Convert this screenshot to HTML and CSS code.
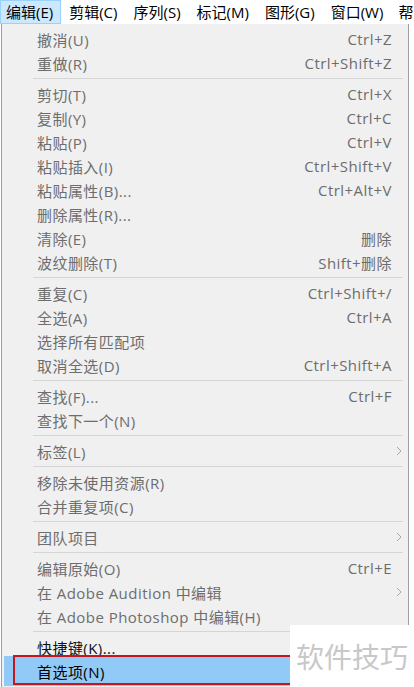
FILE: index.html
```html
<!DOCTYPE html>
<html lang="zh-CN">
<head>
<meta charset="utf-8">
<title>编辑菜单</title>
<link rel="stylesheet" href="styles.css">
</head>
<body>
<div class="menubar">
  <span class="mb-item active">编辑(E)</span>
  <span class="mb-item">剪辑(C)</span>
  <span class="mb-item">序列(S)</span>
  <span class="mb-item">标记(M)</span>
  <span class="mb-item">图形(G)</span>
  <span class="mb-item">窗口(W)</span>
  <span class="mb-item last">帮</span>
</div>
<div class="dropdown">
  <div class="row"><span class="label">撤消(U)</span><span class="key">Ctrl+Z</span><span class="arr"></span></div>
  <div class="row"><span class="label">重做(R)</span><span class="key">Ctrl+Shift+Z</span><span class="arr"></span></div>
  <div class="sep"></div>
  <div class="row"><span class="label">剪切(T)</span><span class="key">Ctrl+X</span><span class="arr"></span></div>
  <div class="row"><span class="label">复制(Y)</span><span class="key">Ctrl+C</span><span class="arr"></span></div>
  <div class="row"><span class="label">粘贴(P)</span><span class="key">Ctrl+V</span><span class="arr"></span></div>
  <div class="row"><span class="label">粘贴插入(I)</span><span class="key">Ctrl+Shift+V</span><span class="arr"></span></div>
  <div class="row"><span class="label">粘贴属性(B)...</span><span class="key">Ctrl+Alt+V</span><span class="arr"></span></div>
  <div class="row"><span class="label">删除属性(R)...</span><span class="key"></span><span class="arr"></span></div>
  <div class="row"><span class="label">清除(E)</span><span class="key">删除</span><span class="arr"></span></div>
  <div class="row"><span class="label">波纹删除(T)</span><span class="key">Shift+删除</span><span class="arr"></span></div>
  <div class="sep"></div>
  <div class="row"><span class="label">重复(C)</span><span class="key">Ctrl+Shift+/</span><span class="arr"></span></div>
  <div class="row"><span class="label">全选(A)</span><span class="key">Ctrl+A</span><span class="arr"></span></div>
  <div class="row"><span class="label">选择所有匹配项</span><span class="key"></span><span class="arr"></span></div>
  <div class="row"><span class="label">取消全选(D)</span><span class="key">Ctrl+Shift+A</span><span class="arr"></span></div>
  <div class="sep"></div>
  <div class="row"><span class="label">查找(F)...</span><span class="key">Ctrl+F</span><span class="arr"></span></div>
  <div class="row"><span class="label">查找下一个(N)</span><span class="key"></span><span class="arr"></span></div>
  <div class="sep"></div>
  <div class="row"><span class="label">标签(L)</span><span class="key"></span><span class="arr"><svg width="6" height="10" viewBox="0 0 6 10"><path d="M1 1 L5 5 L1 9" fill="none" stroke="#a6a6a6" stroke-width="1"/></svg></span></div>
  <div class="sep"></div>
  <div class="row"><span class="label">移除未使用资源(R)</span><span class="key"></span><span class="arr"></span></div>
  <div class="row"><span class="label">合并重复项(C)</span><span class="key"></span><span class="arr"></span></div>
  <div class="sep"></div>
  <div class="row"><span class="label">团队项目</span><span class="key"></span><span class="arr"><svg width="6" height="10" viewBox="0 0 6 10"><path d="M1 1 L5 5 L1 9" fill="none" stroke="#a6a6a6" stroke-width="1"/></svg></span></div>
  <div class="sep"></div>
  <div class="row"><span class="label">编辑原始(O)</span><span class="key">Ctrl+E</span><span class="arr"></span></div>
  <div class="row"><span class="label">在 Adobe Audition 中编辑</span><span class="key"></span><span class="arr"><svg width="6" height="10" viewBox="0 0 6 10"><path d="M1 1 L5 5 L1 9" fill="none" stroke="#a6a6a6" stroke-width="1"/></svg></span></div>
  <div class="row"><span class="label">在 Adobe Photoshop 中编辑(H)</span><span class="key"></span><span class="arr"></span></div>
  <div class="sep"></div>
  <div class="row dark"><span class="label">快捷键(K)...</span><span class="key"></span><span class="arr"></span></div>
  <div class="row dark selected"><span class="label">首选项(N)</span><span class="key"></span><span class="arr"></span></div>
</div>
<div class="redbox"></div>
<div class="watermark">软件技巧</div>
</body>
</html>
```

FILE: styles.css
```css
html, body {
  margin: 0;
  padding: 0;
  background: #ffffff;
  width: 414px;
  height: 687px;
  overflow: hidden;
  position: relative;
  font-family: "Open Sans", "Noto Sans CJK SC", sans-serif;
  font-size: 15px;
}

.menubar {
  display: flex;
  height: 24px;
  background: #ffffff;
  white-space: nowrap;
  overflow: hidden;
}

.mb-item {
  display: flex;
  align-items: center;
  padding: 0 7px 0 7px;
  color: #000000;
  line-height: 24px;
  box-sizing: border-box;
  border: 1px solid transparent;
}

.mb-item.active {
  background: #cce8ff;
  border-color: #99d1ff;
  padding-left: 5px;
}

.mb-item.last {
  padding-left: 6px;
}

.dropdown {
  margin-left: 1px;
  width: 408px;
  box-sizing: border-box;
  border-left: 1px solid #a0a0a0;
  border-right: 1px solid #a0a0a0;
  background: #f0f0f0;
  padding-top: 3px;
  height: 663px;
  letter-spacing: 0.45px;
}

.row {
  display: grid;
  grid-template-columns: 1fr auto 16px;
  align-items: center;
  height: 24px;
  padding-left: 35px;
  color: #6d6d6d;
  white-space: nowrap;
}

.row .key {
  text-align: right;
}

.row .arr {
  display: flex;
  align-items: center;
  justify-content: flex-start;
  padding-left: 4px;
}

.row.dark {
  color: #111111;
}

.row.selected {
  background: #91c9f7;
  color: #000000;
  margin-left: 2px;
  padding-left: 33px;
  height: 30px;
  margin-top: -3px;
}

.sep {
  height: 1px;
  background: #d5d5d5;
  margin: 3px 5px 3px 31px;
}

.redbox {
  position: absolute;
  left: 13px;
  top: 655px;
  width: 300px;
  height: 30px;
  box-sizing: border-box;
  border: 2px solid #c4161c;
}

.watermark {
  position: absolute;
  left: 290px;
  top: 625px;
  width: 124px;
  height: 62px;
  background: #ffffff;
  color: #c8c8c8;
  font-family: "Noto Sans CJK SC", sans-serif;
  font-size: 28px;
  line-height: 62px;
  padding-left: 6px;
  box-sizing: border-box;
  white-space: nowrap;
}
```
